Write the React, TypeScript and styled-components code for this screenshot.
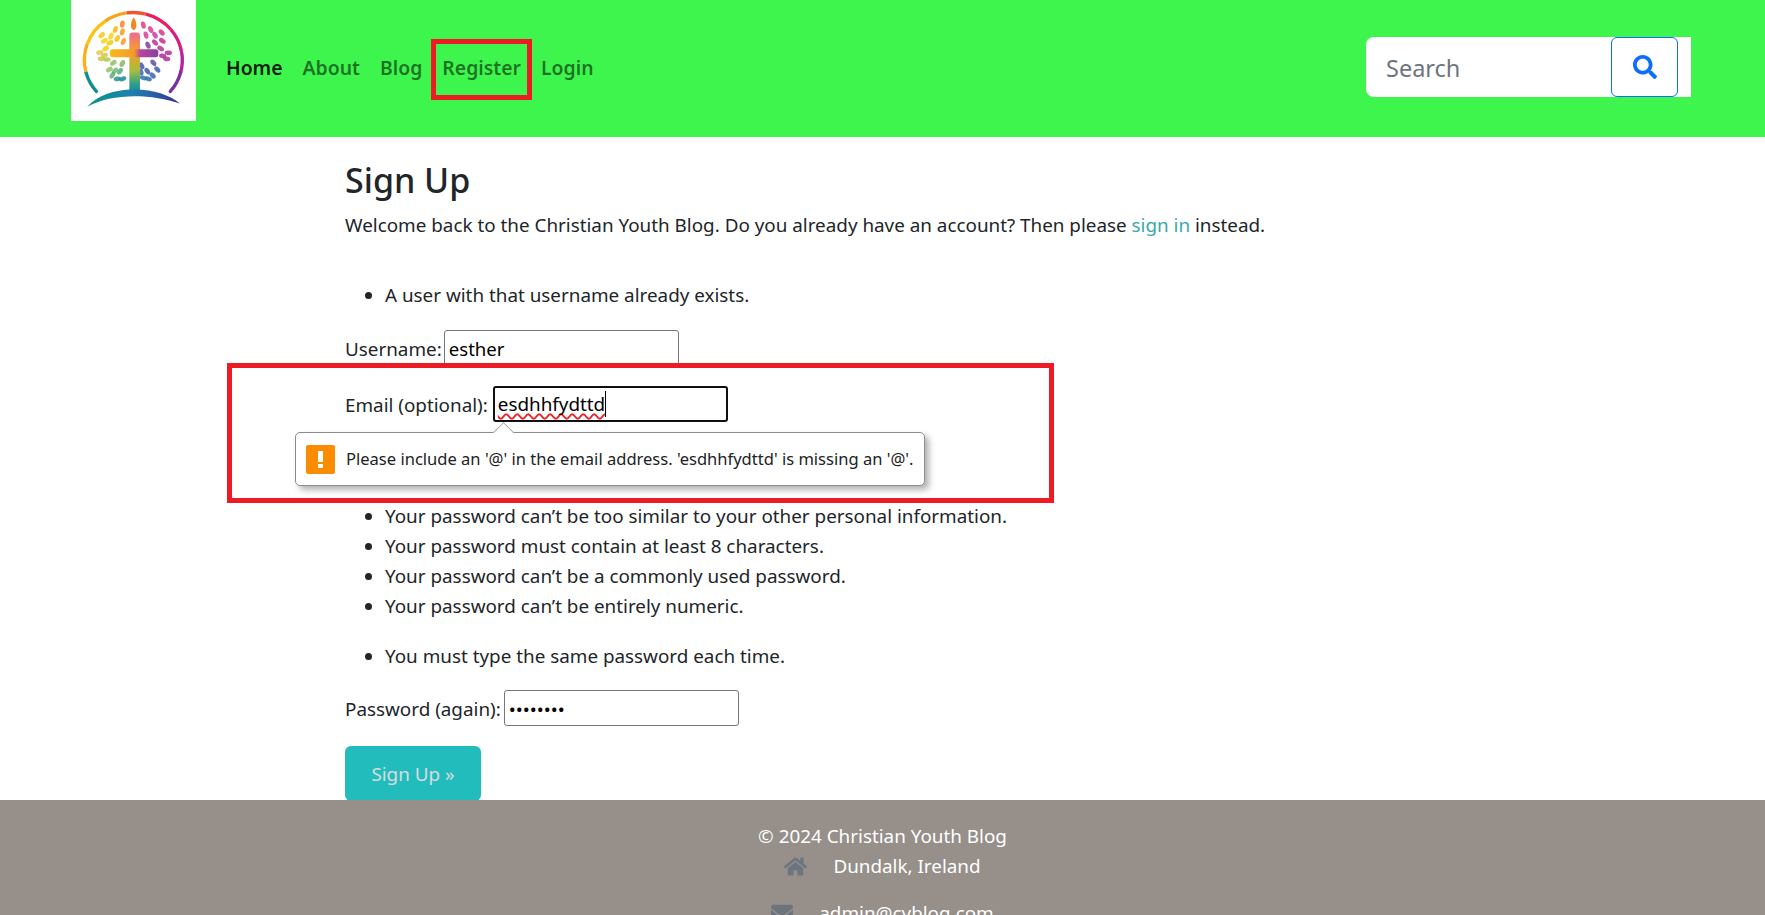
import React from 'react';
import styled, { createGlobalStyle } from 'styled-components';
import { FaSearch, FaHome, FaEnvelope } from 'react-icons/fa';

const GlobalStyle = createGlobalStyle`
    html, body {
        margin: 0;
        height: 100%;
        overflow: hidden;
        background: #fff;
    }
    body {
        font-family: 'Noto Sans', 'Open Sans', sans-serif;
        font-size: 18.85px;
        line-height: 30px;
        color: #212529;
    }
    * {
        box-sizing: border-box;
    }
`;

const ringStops: [number, string][] = [
    [139, '#0f8f8c'], [164, '#1a9f86'], [166, '#fbb017'], [200, '#fcc20f'], [235, '#f9a31c'],
    [262, '#f0542f'], [285, '#ec1c62'], [320, '#d81b84'], [350, '#b2249c'], [375, '#7d2f9f'], [401, '#3f3a9c']
];

function ringSegment(from: number, to: number) {
    const pt = (a: number) => {
        const r = (a * Math.PI) / 180;
        return `${220 + 147 * Math.cos(r)} ${180 + 143 * Math.sin(r)}`;
    };
    return `M${pt(from)} A147 143 0 0 1 ${pt(to)}`;
}

// x, y, rotation, colour -- read off the reference logo
const leaves: [number, number, number, string][] = [
    [125, 105, 50, '#fbc60f'], [133, 122, 60, '#f9d20e'], [153, 108, 25, '#f7d40f'], [166, 88, 20, '#f8b716'],
    [187, 95, 15, '#f59b1f'], [172, 115, 30, '#f4c013'], [150, 128, 65, '#eecb15'], [137, 145, 55, '#f1d40e'],
    [190, 124, 20, '#f49a22'], [187, 72, 10, '#f4871f'], [119, 157, 80, '#e4c94a'], [133, 165, 75, '#d8c83a'],
    [124, 176, 90, '#c8c84e'], [141, 178, 85, '#b6c74b'], [160, 188, 55, '#8dc063'], [148, 208, 60, '#8fc468'],
    [165, 212, 40, '#76b96c'], [180, 213, 35, '#4fae7c'], [157, 225, 30, '#58b07c'], [172, 236, 80, '#2a8f8f'],
    [188, 236, 70, '#178a96'], [187, 190, 30, '#7fb860'],
    [250, 75, -15, '#e53a86'], [272, 88, -25, '#df3a93'], [258, 105, -15, '#d93a99'], [285, 105, -30, '#cf3a9e'],
    [305, 97, -40, '#d8358f'], [264, 135, -25, '#7a3f9f'], [285, 127, -40, '#bb339d'], [307, 122, -55, '#c92c90'],
    [302, 145, -60, '#b82f92'], [325, 158, -85, '#bd2b8d'], [308, 167, -80, '#a73098'], [320, 176, -80, '#b0309a'],
    [280, 188, -40, '#5f4ba6'], [245, 197, -30, '#4f51ab'], [262, 213, -35, '#4556ad'], [292, 208, -40, '#3e5bb0'],
    [278, 226, -45, '#3d63b3'], [250, 233, -70, '#2e75ac'], [265, 236, -70, '#2a6fae'], [243, 215, -20, '#3c66b0']
];

function Logo() {
    return (
        <svg width="125" height="121" viewBox="33 0 375 362">
            <defs>
                <linearGradient id="crossDown" x1="0" y1="0" x2="0" y2="1">
                    <stop offset="0" stopColor="#ee6a92" />
                    <stop offset="0.3" stopColor="#f3a02a" />
                    <stop offset="0.6" stopColor="#a7bd3e" />
                    <stop offset="0.82" stopColor="#2c9d8c" />
                    <stop offset="1" stopColor="#1a7fae" />
                </linearGradient>
                <linearGradient id="crossAcross" x1="0" y1="0" x2="1" y2="0">
                    <stop offset="0" stopColor="#f9b91a" />
                    <stop offset="0.5" stopColor="#f39a2b" />
                    <stop offset="0.62" stopColor="#b9479a" />
                    <stop offset="1" stopColor="#8a3ea2" />
                </linearGradient>
                <linearGradient id="ground" x1="0" y1="0" x2="1" y2="0">
                    <stop offset="0" stopColor="#0b9487" />
                    <stop offset="0.45" stopColor="#1a83ae" />
                    <stop offset="0.72" stopColor="#2a5fa8" />
                    <stop offset="1" stopColor="#3c2a90" />
                </linearGradient>
            </defs>
            {ringStops.slice(0, -1).map(([a, c], i) => (
                <path key={a} d={ringSegment(a, ringStops[i + 1][0])} fill="none" stroke={c} strokeWidth="10" strokeLinecap={i === 0 || i === ringStops.length - 2 ? 'round' : 'butt'} />
            ))}
            {leaves.map(([x, y, r, c]) => (
                <ellipse key={`${x}-${y}`} cx={x} cy={y} rx="7" ry="11" fill={c} opacity="0.85" transform={`rotate(${r} ${x} ${y})`} />
            ))}
            <path d="M221 52 C232 66 232 88 221 90 C210 88 210 66 221 52Z" fill="#f08a24" />
            <rect x="208" y="97" width="32" height="190" rx="10" fill="url(#crossDown)" />
            <rect x="150" y="147" width="145" height="24" rx="8" fill="url(#crossAcross)" />
            <path d="M82 320 C110 285 170 266 225 268 C280 268 330 285 360 310 C320 296 270 288 225 288 C170 288 120 298 82 320Z" fill="url(#ground)" />
        </svg>
    );
}

export default function App() {
    return (
        <Page>
            <GlobalStyle />
            <NavBar>
                <LogoBox>
                    <Logo />
                </LogoBox>
                <NavLinks>
                    <NavLink active>Home</NavLink>
                    <NavLink>About</NavLink>
                    <NavLink>Blog</NavLink>
                    <NavLink>Register</NavLink>
                    <NavLink>Login</NavLink>
                </NavLinks>
                <SearchForm>
                    <SearchInput placeholder="Search" />
                    <SearchButton>
                        <FaSearch size={24} />
                    </SearchButton>
                </SearchForm>
            </NavBar>
            <Main>
                <Title>Sign Up</Title>
                <Intro>
                    Welcome back to the Christian Youth Blog. Do you already have an account? Then please <TealLink>sign in</TealLink> instead.
                </Intro>
                <Notes $top={40}>
                    <li>A user with that username already exists.</li>
                </Notes>
                <Row $gap={2}>
                    <FieldLabel>Username:</FieldLabel>
                    <TextBox defaultValue="esther" />
                </Row>
                <Row>
                    <FieldLabel>Email (optional):</FieldLabel>
                    <FocusBox>
                        <Typed>esdhhfydttd</Typed>
                        <Caret />
                    </FocusBox>
                    <Bubble>
                        <Arrow />
                        <WarnIcon>
                            <svg width="29" height="29" viewBox="0 0 29 29">
                                <rect x="12" y="6" width="5" height="11" fill="#fff" />
                                <rect x="12" y="19" width="5" height="4" fill="#fff" />
                            </svg>
                        </WarnIcon>
                        Please include an '@' in the email address. 'esdhhfydttd' is missing an '@'.
                    </Bubble>
                </Row>
                <Row>
                    <FieldLabel>Password:</FieldLabel>
                    <TextBox type="password" />
                </Row>
                <Notes $top={23}>
                    <li>Your password can’t be too similar to your other personal information.</li>
                    <li>Your password must contain at least 8 characters.</li>
                    <li>Your password can’t be a commonly used password.</li>
                    <li>Your password can’t be entirely numeric.</li>
                </Notes>
                <Notes $top={20}>
                    <li>You must type the same password each time.</li>
                </Notes>
                <Row $top={19} $gap={3}>
                    <FieldLabel>Password (again):</FieldLabel>
                    <TextBox type="password" defaultValue="12345678" />
                </Row>
                <SignUpButton>Sign Up »</SignUpButton>
            </Main>
            <Footer>
                <FooterLine>© 2024 Christian Youth Blog</FooterLine>
                <FooterLine>
                    <FaHome size={23} />
                    Dundalk, Ireland
                </FooterLine>
                <FooterLine $top={17}>
                    <FaEnvelope size={22} />
                    admin@cyblog.com
                </FooterLine>
            </Footer>
            <RedBox $left={431} $top={39} $width={101} $height={61} />
            <RedBox $left={227} $top={363} $width={827} $height={140} />
        </Page>
    );
}

const Page = styled.div`
    position: relative;
    height: 915px;
    overflow: hidden;
`;

const NavBar = styled.nav`
    display: flex;
    align-items: flex-start;
    height: 137px;
    padding-left: 71px;
    background-color: #3ef54d;
`;

const LogoBox = styled.div`
    width: 125px;
    height: 121px;
    background: #fff;
`;

const NavLinks = styled.div`
    display: flex;
    gap: 20px;
    margin-left: 30px;
    margin-top: 53px;
`;

const NavLink = styled.a<{ active?: boolean }>`
    font-weight: 600;
    font-size: 19.4px;
    color: ${(props) => (props.active ? 'rgba(0, 0, 0, 0.9)' : 'rgba(0, 0, 0, 0.55)')};
`;

const SearchForm = styled.form`
    display: flex;
    width: 325px;
    height: 60px;
    margin: 37px 0 0 auto;
    margin-right: 74px;
    padding-right: 13px;
    background: #fff;
    border-radius: 8px 0 0 8px;
`;

const SearchInput = styled.input`
    flex: 1;
    min-width: 0;
    padding: 2px 20px 0;
    border: 0;
    border-radius: 8px 0 0 8px;
    outline: none;
    background: transparent;
    font-family: inherit;
    font-size: 23.5px;

    &::placeholder {
        color: #6c757d;
    }
`;

const SearchButton = styled.button`
    display: flex;
    align-items: center;
    justify-content: center;
    width: 67px;
    padding: 0;
    color: #0d6efd;
    background: #fff;
    border: 1px solid #0d6efd;
    border-radius: 6px;
`;

const Main = styled.main`
    height: 663px;
    padding-left: 345px;
`;

const Title = styled.h2`
    margin: 0;
    padding-top: 20px;
    font-size: 34px;
    font-weight: 500;
    line-height: 46px;
`;

const Intro = styled.p`
    margin: 7px 0 0;
`;

const TealLink = styled.a`
    color: #3aa9a9;
`;

const Notes = styled.ul<{ $top: number }>`
    margin: ${(props) => props.$top}px 0 0;
    padding-left: 40px;
`;

const Row = styled.div<{ $top?: number; $gap?: number }>`
    position: relative;
    display: flex;
    align-items: center;
    gap: ${(props) => props.$gap ?? 5}px;
    height: 36px;
    margin-top: ${(props) => props.$top ?? 20}px;
`;

const FieldLabel = styled.label`
    padding-top: 2px;
`;

const TextBox = styled.input`
    width: 235px;
    height: 36px;
    padding: 0 4px;
    border: 1px solid #767676;
    border-radius: 3px;
    font-family: inherit;
    font-size: 18.6px;
    color: #000;
`;

const FocusBox = styled.div`
    display: flex;
    align-items: center;
    width: 235px;
    height: 36px;
    padding: 0 3px;
    border: 2px solid #101010;
    border-radius: 3px;
    color: #000;
`;

const Typed = styled.span`
    text-decoration: underline wavy #e8242c 1.5px;
    text-decoration-skip-ink: none;
    text-underline-offset: 2px;
`;

const Caret = styled.span`
    width: 1px;
    height: 26px;
    background: #000;
`;

const Bubble = styled.div`
    position: absolute;
    left: -50px;
    top: 46px;
    z-index: 2;
    display: flex;
    align-items: center;
    gap: 11px;
    width: 630px;
    height: 54px;
    padding-left: 10px;
    background: #fff;
    border: 1px solid #8c8c8c;
    border-radius: 5px;
    box-shadow: 4px 4px 6px rgba(0, 0, 0, 0.3);
    font-size: 16.55px;
    color: #222;
    white-space: nowrap;
`;

const Arrow = styled.span`
    position: absolute;
    left: 200px;
    top: -8px;
    width: 15px;
    height: 15px;
    background: #fff;
    border-left: 1px solid #a8a8a8;
    border-top: 1px solid #a8a8a8;
    transform: rotate(45deg);
`;

const WarnIcon = styled.span`
    display: flex;
    width: 29px;
    height: 29px;
    background: #fb8c00;
    border-radius: 2px;
`;

const SignUpButton = styled.button`
    display: block;
    width: 136px;
    height: 55px;
    margin-top: 20px;
    padding: 0;
    font-family: inherit;
    font-size: 18.85px;
    color: #d8dcdc;
    background: #22bcbc;
    border: 0;
    border-radius: 6px;
`;

const Footer = styled.footer`
    padding-top: 21px;
    height: 200px;
    background: #968f8a;
    color: #fff;
`;

const FooterLine = styled.div<{ $top?: number }>`
    display: flex;
    align-items: center;
    justify-content: center;
    gap: 26px;
    margin-top: ${(props) => props.$top ?? 0}px;

    svg {
        color: #6c757d;
    }
`;

const RedBox = styled.div<{ $left: number; $top: number; $width: number; $height: number }>`
    position: absolute;
    left: ${(props) => props.$left}px;
    top: ${(props) => props.$top}px;
    width: ${(props) => props.$width}px;
    height: ${(props) => props.$height}px;
    border: 5px solid #ed1c24;
    z-index: 3;
    pointer-events: none;
`;
